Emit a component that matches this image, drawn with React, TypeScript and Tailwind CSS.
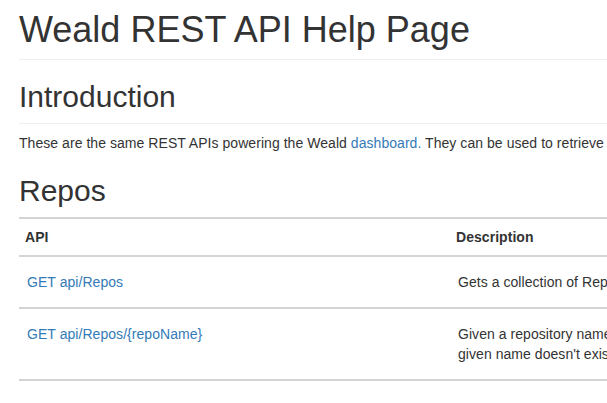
import React from 'react';

interface ApiRow {
  method: string;
  path: string;
  description: React.ReactNode;
}

const rows: ApiRow[] = [
  {
    method: "GET",
    path: "api/Repos",
    description: "Gets a collection of Repos that are currently tracked by Weald.",
  },
  {
    method: "GET",
    path: "api/Repos/{repoName}",
    description: (
      <>
        Given a repository name, returns the Repo with that name, or a 404 if a repo with the
        <br />
        given name doesn't exist.
      </>
    ),
  },
];

export default function App() {
  return (
    <div className="w-full min-h-screen overflow-hidden bg-white text-[#333] font-['Liberation_Sans',Arial,sans-serif] text-[14px] leading-[20px]">
      <div className="w-[1140px] pl-[19px]">
        <div className="border-b border-[#eee] pb-[9px] mt-[10px]">
          <h1 className="text-[36px] leading-[40px] font-normal">Weald REST API Help Page</h1>
        </div>

        <div className="mt-[20px] border-b border-[#eee] pb-[10px]">
          <h2 className="text-[30px] leading-[33px] font-normal">Introduction</h2>
        </div>

        <p className="mt-[9px] tracking-[0.05px]">
          These are the same REST APIs powering the Weald{" "}
          <a href="#" className="text-[#337ab7]">dashboard.</a> They can be used to retrieve
          information about repositories, builds and tests tracked by Weald.
        </p>

        <h2 className="mt-[21px] mb-[10px] text-[30px] leading-[33px] font-normal">Repos</h2>

        <table className="w-full table-fixed border-collapse border-t-2 border-[#d4d4d4] text-left tracking-[0.05px]">
          <colgroup>
            <col className="w-[431px]" />
            <col />
          </colgroup>
          <thead>
            <tr>
              <th className="border-b-2 border-[#d4d4d4] px-[6px] py-[8px] font-bold">API</th>
              <th className="border-b-2 border-[#d4d4d4] px-[6px] py-[8px] font-bold">Description</th>
            </tr>
          </thead>
          <tbody>
            {rows.map((r) => (
              <tr key={r.path}>
                <td className="border-b-2 border-[#d4d4d4] px-[8px] py-[15px] align-top">
                  <a href="#" className="text-[#337ab7]">
                    {r.method} {r.path}
                  </a>
                </td>
                <td className="border-b-2 border-[#d4d4d4] px-[8px] py-[15px] align-top whitespace-nowrap">
                  {r.description}
                </td>
              </tr>
            ))}
          </tbody>
        </table>
      </div>
    </div>
  );
}
